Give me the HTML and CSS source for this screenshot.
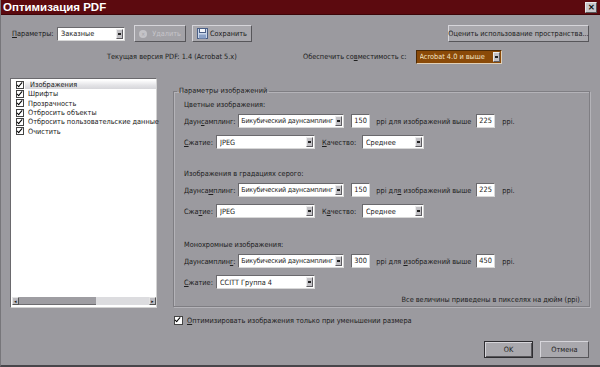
FILE: index.html
```html
<!DOCTYPE html>
<html lang="ru">
<head>
    <meta charset="UTF-8">
    <meta name="viewport" content="width=device-width, initial-scale=1.0">
    <title>Оптимизация PDF</title>
    <link rel="stylesheet" href="styles.css">
</head>
<body>
    <div class="dialog">
        <div class="titlebar">
            <span class="title">Оптимизация PDF</span>
            <span class="close">&#x2715;</span>
        </div>

        <div class="toolbar">
            <span class="lbl-params"><u>П</u>араметры:</span>
            <div class="select w-preset"><span class="val">Заказные</span><span class="arrow"></span></div>
            <button class="btn btn-delete" disabled>
                <span class="ico-del">&#x2715;</span>Удалить
            </button>
            <button class="btn btn-save">
                <svg class="ico-save" width="11" height="11" viewBox="0 0 11 11">
                    <rect x="0.5" y="0.5" width="10" height="10" fill="#c9d6ea" stroke="#4a5f86"/>
                    <rect x="2.5" y="0.5" width="6" height="4" fill="#f4f6fa" stroke="#4a5f86"/>
                    <rect x="2" y="6.5" width="7" height="4" fill="#8ba2c8"/>
                </svg>Сохранить
            </button>
            <button class="btn btn-space">Оценить использование пространства...</button>
        </div>

        <div class="info-row">
            <span class="version">Текущая версия PDF: 1.4 (Acrobat 5.x)</span>
            <span class="compat-lbl">Обеспечить со<u>в</u>местимость с:</span>
            <div class="select select-compat"><span class="val">Acrobat 4.0 и выше</span><span class="arrow"></span></div>
        </div>

        <div class="main">
            <div class="listbox">
                <ul class="items">
                    <li class="selected"><span class="cb"></span>Изображения</li>
                    <li><span class="cb"></span>Шрифты</li>
                    <li><span class="cb"></span>Прозрачность</li>
                    <li><span class="cb"></span>Отбросить объекты</li>
                    <li><span class="cb"></span>Отбросить пользовательские данные</li>
                    <li><span class="cb"></span>Очистить</li>
                </ul>
                <div class="hscroll">
                    <span class="sb-btn">&#x25C2;</span>
                    <span class="sb-thumb"></span>
                    <span class="sb-track"></span>
                    <span class="sb-btn">&#x25B8;</span>
                </div>
            </div>

            <fieldset class="group">
                <legend>Параметры изображений</legend>

                <div class="section">
                    <div class="sec-title">Цветные изображения:</div>
                    <div class="row">
                        <span class="lbl-ds">Даун<u>с</u>амплинг:</span>
                        <div class="select w-ds"><span class="val">Бикубический даунсамплинг</span><span class="arrow"></span></div>
                        <span class="input">150</span>
                        <span class="ppi-above">ppi <u>д</u>ля изображений выше</span>
                        <span class="input input-2">225</span>
                        <span class="ppi">ppi.</span>
                    </div>
                    <div class="row row-2">
                        <span class="lbl-comp"><u>С</u>жатие:</span>
                        <div class="select w-comp"><span class="val">JPEG</span><span class="arrow"></span></div>
                        <span class="lbl-qual"><u>К</u>ачество:</span>
                        <div class="select w-qual"><span class="val">Среднее</span><span class="arrow"></span></div>
                    </div>
                </div>

                <div class="section sec-gray">
                    <div class="sec-title">Изображения в градациях серого:</div>
                    <div class="row">
                        <span class="lbl-ds">Даунса<u>м</u>плинг:</span>
                        <div class="select w-ds"><span class="val">Бикубический даунсамплинг</span><span class="arrow"></span></div>
                        <span class="input">150</span>
                        <span class="ppi-above">ppi дл<u>я</u> изображений выше</span>
                        <span class="input input-2">225</span>
                        <span class="ppi">ppi.</span>
                    </div>
                    <div class="row row-2">
                        <span class="lbl-comp">Сжа<u>т</u>ие:</span>
                        <div class="select w-comp"><span class="val">JPEG</span><span class="arrow"></span></div>
                        <span class="lbl-qual">К<u>а</u>чество:</span>
                        <div class="select w-qual"><span class="val">Среднее</span><span class="arrow"></span></div>
                    </div>
                </div>

                <div class="section sec-mono">
                    <div class="sec-title">Монохромные изображения:</div>
                    <div class="row">
                        <span class="lbl-ds">Даунсамплин<u>г</u>:</span>
                        <div class="select w-ds"><span class="val">Бикубический даунсамплинг</span><span class="arrow"></span></div>
                        <span class="input">300</span>
                        <span class="ppi-above">ppi для <u>и</u>зображений выше</span>
                        <span class="input input-2">450</span>
                        <span class="ppi">ppi.</span>
                    </div>
                    <div class="row row-2">
                        <span class="lbl-comp"><u>С</u>жатие:</span>
                        <div class="select w-comp"><span class="val">CCITT Группа 4</span><span class="arrow"></span></div>
                    </div>
                </div>

                <div class="note">Все величины приведены в пикселях на дюйм (ppi).</div>
            </fieldset>
        </div>

        <div class="option">
            <span class="cb cb-box"></span><span><u>О</u>птимизировать изображения только при уменьшении размера</span>
        </div>

        <div class="footer">
            <button class="btn btn-ok">OK</button>
            <button class="btn btn-cancel">Отмена</button>
        </div>
    </div>
</body>
</html>
```

FILE: styles.css
```css
body {
    margin: 0;
    font-family: "Liberation Sans Narrow", "DejaVu Sans Condensed", "Liberation Sans", sans-serif;
    font-size: 7.3px;
    color: #202020;
    background: #9b9a9f;
}
u {
    text-decoration: underline;
}
.dialog {
    width: 600px;
    height: 367px;
    box-sizing: border-box;
    background: #9b9a9f;
    border-left: 1px solid #77767a;
    border-bottom: 2px solid #47464a;
    overflow: hidden;
}
.titlebar {
    height: 15px;
    background: #5c0a0f;
    display: flex;
    align-items: center;
    justify-content: space-between;
    padding: 0 3px 0 2px;
    border-bottom: 1px solid #3d0508;
    box-sizing: border-box;
}
.title {
    color: #fff;
    font-family: "Liberation Sans", Arial, sans-serif;
    font-weight: bold;
    font-size: 11.5px;
}
.close {
    width: 12px;
    height: 11px;
    background: #c8c7cb;
    border: 1px solid #e8e8e8;
    border-right-color: #555;
    border-bottom-color: #555;
    font-family: "Liberation Sans", Arial, sans-serif;
    font-size: 8px;
    font-weight: bold;
    line-height: 10px;
    text-align: center;
    color: #111;
    box-sizing: border-box;
}

/* controls */
.select {
    display: flex;
    align-items: center;
    flex: none;
    height: 14px;
    background: #fff;
    border: 1px solid #6a696d;
    border-right-color: #d8d8d8;
    border-bottom-color: #d8d8d8;
    box-sizing: border-box;
    padding-left: 3px;
}
.select .val {
    flex: 1;
    white-space: nowrap;
    overflow: hidden;
}
.select .arrow {
    width: 7px;
    height: 10px;
    margin-right: 1px;
    background: #c2c1c5;
    border: 1px solid #ececec;
    border-right-color: #5e5d61;
    border-bottom-color: #5e5d61;
    box-sizing: border-box;
    position: relative;
    flex: none;
}
.select .arrow::after {
    content: "";
    position: absolute;
    left: 1px;
    top: 3px;
    width: 3px;
    height: 2px;
    background: #222;
}
.btn {
    height: 17px;
    font-family: inherit;
    font-size: 7.3px;
    color: #202020;
    background: #a9a8ad;
    border: 1px solid #d6d5da;
    border-right-color: #57565a;
    border-bottom-color: #57565a;
    padding: 0;
    display: flex;
    align-items: center;
    justify-content: center;
    box-sizing: border-box;
    white-space: nowrap;
    flex: none;
}
.input {
    flex: none;
    width: 19px;
    height: 14px;
    background: #fff;
    border: 1px solid #6a696d;
    border-right-color: #d8d8d8;
    border-bottom-color: #d8d8d8;
    box-sizing: border-box;
    padding-left: 2px;
    line-height: 12px;
}

/* top rows */
.toolbar {
    display: flex;
    align-items: center;
    height: 17px;
    margin-top: 10px;
    padding: 0 11px 0 11px;
}
.lbl-params {
    width: 45px;
    flex: none;
}
.w-preset {
    width: 68px;
}
.btn-delete {
    width: 52px;
    margin-left: 9px;
    color: #c6c5ca;
    background: #a3a2a7;
}
.ico-del {
    width: 8px;
    height: 8px;
    border-radius: 50%;
    background: #c4c3c7;
    color: #a3a2a7;
    font-size: 5px;
    line-height: 8px;
    text-align: center;
    margin-right: 5px;
}
.btn-save {
    width: 60px;
    margin-left: 6px;
    justify-content: flex-start;
    padding-left: 4px;
}
.ico-save {
    margin-right: 2px;
}
.btn-space {
    width: 141px;
    margin-left: auto;
}
.info-row {
    display: flex;
    align-items: center;
    height: 13px;
    margin-top: 8px;
    white-space: nowrap;
}
.version {
    margin-left: 106px;
    width: 196px;
    flex: none;
}
.compat-lbl {
    flex: none;
    margin-right: 9px;
}
.select-compat {
    width: 86px;
    background: #8a4a08;
    color: #f3e3c4;
    border-color: #4d2a05 #e0d0b8 #e0d0b8 #4d2a05;
}

/* main area */
.main {
    display: flex;
    align-items: flex-start;
    margin-top: 15px;
    padding-left: 9px;
}
.listbox {
    flex: none;
    width: 147px;
    height: 230px;
    background: #fff;
    border: 1px solid #6a696d;
    border-right-color: #d2d2d2;
    border-bottom-color: #d2d2d2;
    box-sizing: border-box;
    display: flex;
    flex-direction: column;
}
.items {
    list-style: none;
    margin: 0;
    padding: 1px 0 0 0;
    flex: 1;
}
.items li {
    display: flex;
    align-items: center;
    height: 9.3px;
    padding-left: 5px;
    white-space: nowrap;
}
.items li.selected {
    background: linear-gradient(#fff, #e3e3e6 60%, #d6d6da);
    margin-left: 14px;
    padding-left: 0;
}
.items li.selected .cb {
    margin-left: -9px;
    margin-right: 6px;
}
.cb {
    width: 6px;
    height: 6px;
    border: 1px solid #444;
    background: #fff;
    margin-right: 4px;
    position: relative;
    flex: none;
}
.cb::after {
    content: "";
    position: absolute;
    left: 1px;
    top: -1px;
    width: 2px;
    height: 5px;
    border: solid #000;
    border-width: 0 1.5px 1.5px 0;
    transform: rotate(40deg);
}
.hscroll {
    display: flex;
    height: 8px;
    margin: 0 0 2px 1px;
}
.sb-btn {
    width: 7px;
    background: #bcbbbf;
    border: 1px solid #e4e4e4;
    border-right-color: #555;
    border-bottom-color: #555;
    box-sizing: border-box;
    font-size: 5px;
    line-height: 6px;
    text-align: center;
    color: #111;
}
.sb-thumb {
    width: 77px;
    background: #9e9da2;
    border-bottom: 1px solid #6d6c70;
    box-sizing: border-box;
}
.sb-track {
    flex: 1;
    background: #dcdcdf;
}

/* image settings group */
.group {
    width: 417px;
    height: 221px;
    margin: 8px 0 0 16px;
    padding: 0 0 0 10px;
    border: 1px solid #7f7e83;
    box-shadow: inset 1px 1px 0 #b4b3b8, 1px 1px 0 #b4b3b8;
    box-sizing: border-box;
    min-width: 0;
}
.group legend {
    padding: 0 2px;
    margin-left: -7px;
    line-height: 10px;
}
.section {
    margin-top: 3px;
}
.sec-gray {
    margin-top: 19px;
}
.sec-mono {
    margin-top: 21px;
}
.sec-title {
    height: 12px;
    line-height: 12px;
}
.row {
    display: flex;
    align-items: center;
    height: 14px;
    margin-top: 3px;
    white-space: nowrap;
}
.row > span {
    flex: none;
}
.row-2 {
    margin-top: 7px;
}
.lbl-ds {
    margin-right: 3px;
    letter-spacing: -0.1px;
}
.w-ds {
    width: 106px;
    padding-left: 2px;
}
.w-ds .val {
    font-size: 7px;
    letter-spacing: -0.2px;
}
.row .input {
    margin-left: 7px;
}
.ppi-above {
    margin: 0 5px 0 6px;
}
.row .input-2 {
    margin-left: 0;
}
.ppi {
    margin-left: 7px;
}
.lbl-comp {
    width: 32px;
}
.w-comp {
    width: 99px;
}
.lbl-qual {
    margin-left: 7px;
    width: 40px;
}
.w-qual {
    width: 62px;
}
.note {
    margin-top: 5px;
    height: 12px;
    line-height: 12px;
    text-align: right;
    padding-right: 7px;
}

/* bottom */
.option {
    display: flex;
    align-items: center;
    height: 12px;
    margin: 6px 0 0 173px;
}
.cb-box {
    width: 7px;
    height: 7px;
    margin-right: 4px;
}
.footer {
    display: flex;
    justify-content: flex-end;
    gap: 7px;
    margin-top: 15px;
    padding-right: 11px;
}
.btn-ok {
    width: 49px;
    border: 1px solid #2e2d31;
    box-shadow: inset 1px 1px 0 #d6d5da, inset -1px -1px 0 #57565a;
}
.btn-cancel {
    width: 49px;
}
```
